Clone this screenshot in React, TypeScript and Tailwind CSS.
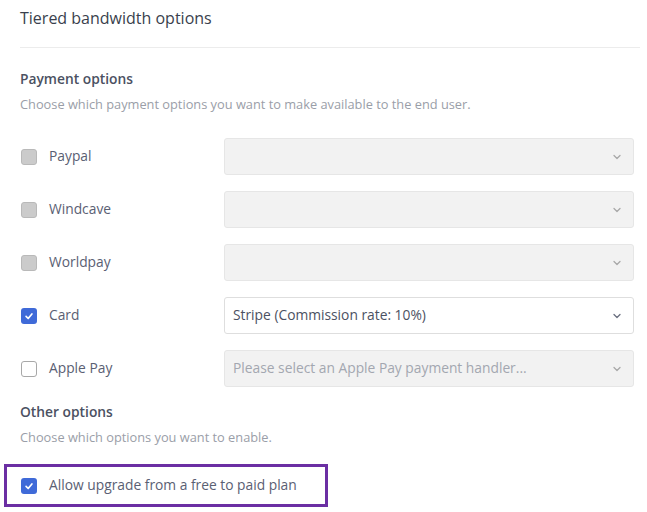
import React from "react";

type Row = {
  label: string;
  checked: boolean;
  disabled: boolean;
  value?: string;
  placeholder?: string;
};

const rows: Row[] = [
  { label: "Paypal", checked: false, disabled: true },
  { label: "Windcave", checked: false, disabled: true },
  { label: "Worldpay", checked: false, disabled: true },
  { label: "Card", checked: true, disabled: false, value: "Stripe (Commission rate: 10%)" },
  { label: "Apple Pay", checked: false, disabled: false, placeholder: "Please select an Apple Pay payment handler..." },
];

function Check({ checked, disabled }: { checked: boolean; disabled: boolean }) {
  if (checked) {
    return (
      <span className="flex h-4 w-4 shrink-0 items-center justify-center rounded-[3px] bg-[#3f6ad8]">
        <svg className="h-2.5 w-2.5" viewBox="0 0 12 12" fill="none" stroke="white" strokeWidth={2} strokeLinecap="round" strokeLinejoin="round">
          <polyline points="2.5 6.5 5 9 9.5 3.5" />
        </svg>
      </span>
    );
  }
  return (
    <span
      className={`h-4 w-4 shrink-0 rounded-[3px] border ${
        disabled ? "border-[#b9b9b9] bg-[#cbcbcb]" : "border-[#a8a8a8] bg-white"
      }`}
    />
  );
}

function Chevron({ dark }: { dark: boolean }) {
  return (
    <svg className={`h-3 w-3 ${dark ? "text-[#6b7080]" : "text-[#a9a9a9]"}`} viewBox="0 0 12 12" fill="none" stroke="currentColor" strokeWidth={1.3} strokeLinecap="round" strokeLinejoin="round">
      <polyline points="3 4.5 6 7.5 9 4.5" />
    </svg>
  );
}

export default function App() {
  return (
    <div className="min-h-screen bg-white text-[#4b5162]" style={{ fontFamily: "'Open Sans', 'Noto Sans', sans-serif" }}>
      <div className="pl-5 pr-[7px] pt-[7px]">
        <h1 className="text-[16px] leading-[22px] text-[#3a3f4d]">Tiered bandwidth options</h1>
        <div className="mt-[18px] h-px bg-[#ececec]" />

        {/* Payment options */}
        <h2 className="mt-[21px] text-[13.8px] font-semibold leading-5 text-[#4b5162]">Payment options</h2>
        <p className="mt-[5px] text-[12.8px] leading-5 text-[#9a9ea8]">
          Choose which payment options you want to make available to the end user.
        </p>

        <div className="mt-[24px] flex flex-col gap-4">
          {rows.map((r) => (
            <div key={r.label} className="flex items-center">
              <div className="flex w-[204px] shrink-0 items-center gap-3 pl-px">
                <Check checked={r.checked} disabled={r.disabled} />
                <span className="text-[13.8px] text-[#5a6073]">{r.label}</span>
              </div>
              <div
                className={`flex h-[37px] w-[410px] shrink-0 items-center justify-between rounded-[3px] border pl-2 pr-2.5 ${
                  r.value ? "border-[#dedede] bg-white" : "border-[#e6e6e6] bg-[#f2f2f2]"
                }`}
              >
                <span className={`text-[13.8px] ${r.value ? "text-[#4b5162]" : "text-[#a3a7b0]"}`}>
                  {r.value ?? r.placeholder ?? ""}
                </span>
                <Chevron dark={!!r.value} />
              </div>
            </div>
          ))}
        </div>

        {/* Other options */}
        <h2 className="mt-[15px] text-[13.8px] font-semibold leading-5 text-[#4b5162]">Other options</h2>
        <p className="mt-[5px] text-[12.8px] leading-5 text-[#9a9ea8]">Choose which options you want to enable.</p>
      </div>

      <div className="ml-1 mt-[17px] flex h-[43px] w-[324px] items-center gap-3 border-[3px] border-[#6b2fa3] pl-[14px]">
        <Check checked disabled={false} />
        <span className="text-[13.8px] text-[#5a6073]">Allow upgrade from a free to paid plan</span>
      </div>
    </div>
  );
}
